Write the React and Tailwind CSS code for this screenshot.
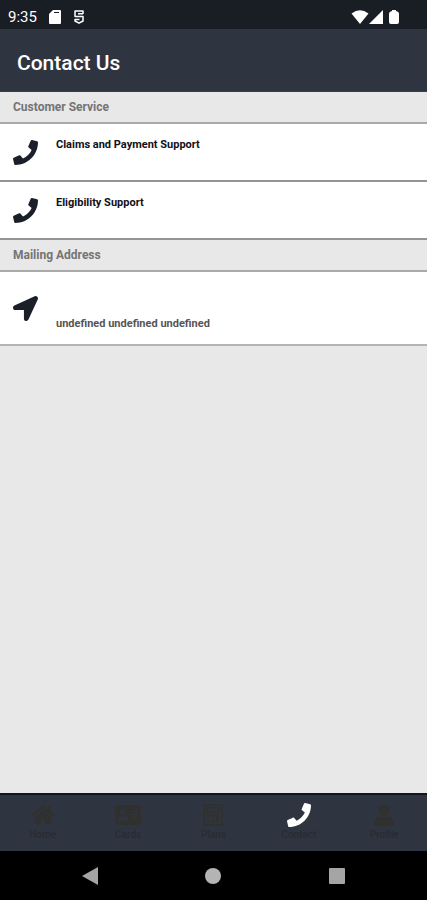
import { FaPhone, FaLocationArrow, FaHome, FaAddressCard } from "react-icons/fa";

function CalculatorIcon({ className }) {
  return (
    <svg viewBox="0 0 20 22" className={className} aria-hidden="true">
      <rect x="1" y="1" width="18" height="20" rx="1" fill="none" stroke="currentColor" strokeWidth="2" />
      <path
        fill="currentColor"
        fillRule="evenodd"
        d="M3 3h14v6H3zM5 4.500v3h10v-3zM4 10.500h3v3H4zM8.500 10.500h3v3h-3zM13 10.500h3v8h-3zM4 15.500h3v3H4zM8.500 15.500h3v3h-3z"
      />
    </svg>
  );
}

function PersonIcon({ className }) {
  return (
    <svg viewBox="0 0 22 22" className={className} aria-hidden="true">
      <circle cx="11" cy="6" r="5.600" fill="currentColor" />
      <path fill="currentColor" d="M6 12.500h10q5 2 5 8 0 1.500-1.500 1.500h-17Q1 22 1 20.500q0-6 5-8z" />
    </svg>
  );
}

function StatusBar() {
  return (
    <div className="flex h-[29px] items-center bg-[#191d24] px-2 pt-1 text-white">
      <span className="text-[15px] leading-5">9:35</span>
      <svg viewBox="0 0 12 14" className="ml-3 h-[14px] w-3" aria-hidden="true">
        <path fill="currentColor" d="M4 0h7q1 0 1 1v12q0 1-1 1H1q-1 0-1-1V4z" />
        <path stroke="#191d24" strokeWidth="1" d="M5 2.500h5" />
      </svg>
      <svg viewBox="0 0 12 14" className="ml-3 h-[14px] w-3" fill="none" aria-hidden="true">
        <path
          stroke="currentColor"
          strokeWidth="1.500"
          strokeLinejoin="round"
          d="M10 4V1H2v5.500h8v4.500L6 13.200 2 11V9.500h4.500M10 3.800H5"
        />
      </svg>
      <div className="ml-auto mr-5 flex items-center">
        <svg viewBox="0 0 18 14" className="h-[14px] w-[18px]" aria-hidden="true">
          <path fill="currentColor" d="M9 14L.5 3.500Q9-3 17.500 3.500z" />
        </svg>
        <svg viewBox="0 0 14 14" className="h-[14px] w-[14px]" aria-hidden="true">
          <path fill="currentColor" d="M14 0v14H0z" />
        </svg>
        <svg viewBox="0 0 10 14" className="ml-[6px] h-[14px] w-[10px]" aria-hidden="true">
          <path fill="currentColor" d="M3 0h4v1q3 .5 3 3v8q0 2-2 2H2q-2 0-2-2V4q0-2.500 3-3z" />
        </svg>
      </div>
    </div>
  );
}

function SectionTitle({ children }) {
  return (
    <h2 className="flex h-8 items-center border-b-2 border-[#a9a9a9] bg-[#e8e8e8] px-[13px] text-[12px] font-bold text-[#747474]">
      {children}
    </h2>
  );
}

function PhoneRow({ label }) {
  return (
    <button type="button" className="flex h-[58px] w-full items-center border-b-2 border-[#949494] bg-white px-[13px] text-left">
      <FaPhone className="h-[25px] w-[25px] shrink-0 text-[#1b1f2a]" aria-hidden="true" />
      <span className="ml-[18px] mb-3.5 text-[11px] leading-4 font-bold text-[#111118]">{label}</span>
    </button>
  );
}

const tabs = [
  { label: "Home", Icon: FaHome, size: "h-6 w-6" },
  { label: "Cards", Icon: FaAddressCard, size: "h-6 w-[26px]" },
  { label: "Plans", Icon: CalculatorIcon, size: "h-[22px] w-5" },
  { label: "Contact", Icon: FaPhone, size: "h-6 w-6", active: true },
  { label: "Profile", Icon: PersonIcon, size: "h-[22px] w-[22px]" },
];

export default function App() {
  return (
    <div className="flex min-h-screen flex-col bg-[#e8e8e8] font-['Roboto',sans-serif]">
      <StatusBar />
      <header className="flex h-[63px] items-center border-b border-[#3d3e48] bg-[#2f3540] px-[17px] pt-1.5">
        <h1 className="text-[21px] leading-7 font-medium text-white">Contact Us</h1>
      </header>
      <main className="flex-1">
        <SectionTitle>Customer Service</SectionTitle>
        <PhoneRow label="Claims and Payment Support" />
        <PhoneRow label="Eligibility Support" />
        <SectionTitle>Mailing Address</SectionTitle>
        <button type="button" className="flex h-[74px] w-full items-center border-b-2 border-[#b4b4b4] bg-white px-[13px] text-left">
          <FaLocationArrow className="h-[25px] w-[25px] shrink-0 text-[#1b1f2a]" aria-hidden="true" />
          <span className="ml-[18px] mt-8 text-[11px] leading-4 font-bold text-[#555555]">undefined undefined undefined</span>
        </button>
      </main>
      <nav className="grid h-[58px] grid-cols-5 border-t-2 border-[#12161e] bg-[#2f3540]">
        {tabs.map(({ label, Icon, size, active }) => (
          <a key={label} href={"#" + label.toLowerCase()} className="flex flex-col items-center pt-2 text-[#30302f]">
            <span className={active ? "flex h-6 items-center text-white" : "flex h-6 items-center"}>
              <Icon className={size} aria-hidden="true" />
            </span>
            <span className="text-[10px] leading-4 font-medium text-[#272b33]">{label}</span>
          </a>
        ))}
      </nav>
      <div className="flex h-[49px] items-center justify-around bg-black px-7 text-[#a5a5a5]">
        <button type="button" aria-label="Back">
          <svg viewBox="0 0 16 18" className="h-[18px] w-4" aria-hidden="true">
            <path fill="currentColor" d="M16 0v18L0 9z" />
          </svg>
        </button>
        <button type="button" aria-label="Home screen" className="h-4 w-4 rounded-full bg-[#b4b4b4]" />
        <button type="button" aria-label="Recent apps" className="h-4 w-4 rounded-[1px] bg-[#a5a5a5]" />
      </div>
    </div>
  );
}
